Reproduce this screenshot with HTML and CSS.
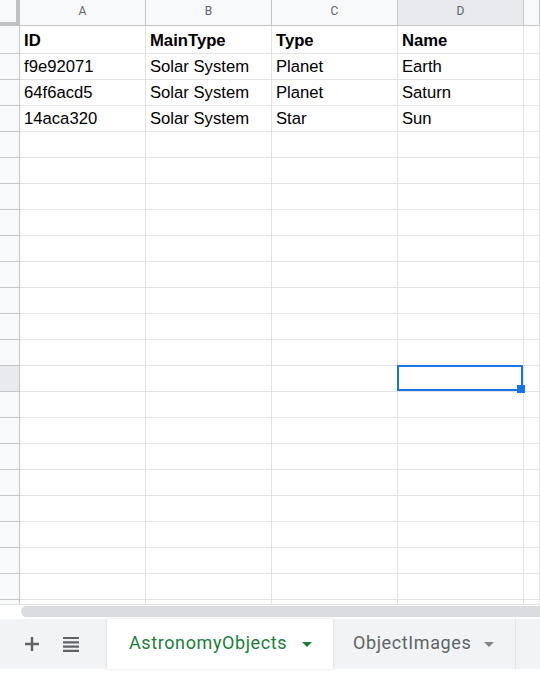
FILE: index.html
```html
<!DOCTYPE html>
<html>
<head>
<meta charset="utf-8">
<link rel="stylesheet" href="styles.css">
</head>
<body>
<div class="grid-wrap">
  <div class="grid" id="grid">
    <div class="corner"></div>
    <div class="colhead">A</div>
    <div class="colhead">B</div>
    <div class="colhead">C</div>
    <div class="colhead sel">D</div>
    <div class="colhead"></div>

    <div class="rowhead"></div>
    <div class="cell bold">ID</div>
    <div class="cell bold">MainType</div>
    <div class="cell bold">Type</div>
    <div class="cell bold">Name</div>
    <div class="cell"></div>

    <div class="rowhead"></div>
    <div class="cell">f9e92071</div>
    <div class="cell">Solar System</div>
    <div class="cell">Planet</div>
    <div class="cell">Earth</div>
    <div class="cell"></div>

    <div class="rowhead"></div>
    <div class="cell">64f6acd5</div>
    <div class="cell">Solar System</div>
    <div class="cell">Planet</div>
    <div class="cell">Saturn</div>
    <div class="cell"></div>

    <div class="rowhead"></div>
    <div class="cell">14aca320</div>
    <div class="cell">Solar System</div>
    <div class="cell">Star</div>
    <div class="cell">Sun</div>
    <div class="cell"></div>

    <div class="rowhead"></div><div class="cell"></div><div class="cell"></div><div class="cell"></div><div class="cell"></div><div class="cell"></div>
    <div class="rowhead"></div><div class="cell"></div><div class="cell"></div><div class="cell"></div><div class="cell"></div><div class="cell"></div>
    <div class="rowhead"></div><div class="cell"></div><div class="cell"></div><div class="cell"></div><div class="cell"></div><div class="cell"></div>
    <div class="rowhead"></div><div class="cell"></div><div class="cell"></div><div class="cell"></div><div class="cell"></div><div class="cell"></div>
    <div class="rowhead"></div><div class="cell"></div><div class="cell"></div><div class="cell"></div><div class="cell"></div><div class="cell"></div>
    <div class="rowhead"></div><div class="cell"></div><div class="cell"></div><div class="cell"></div><div class="cell"></div><div class="cell"></div>
    <div class="rowhead"></div><div class="cell"></div><div class="cell"></div><div class="cell"></div><div class="cell"></div><div class="cell"></div>
    <div class="rowhead"></div><div class="cell"></div><div class="cell"></div><div class="cell"></div><div class="cell"></div><div class="cell"></div>
    <div class="rowhead"></div><div class="cell"></div><div class="cell"></div><div class="cell"></div><div class="cell"></div><div class="cell"></div>
    <div class="rowhead sel"></div><div class="cell"></div><div class="cell"></div><div class="cell"></div><div class="cell active"></div><div class="cell"></div>
    <div class="rowhead"></div><div class="cell"></div><div class="cell"></div><div class="cell"></div><div class="cell"></div><div class="cell"></div>
    <div class="rowhead"></div><div class="cell"></div><div class="cell"></div><div class="cell"></div><div class="cell"></div><div class="cell"></div>
    <div class="rowhead"></div><div class="cell"></div><div class="cell"></div><div class="cell"></div><div class="cell"></div><div class="cell"></div>
    <div class="rowhead"></div><div class="cell"></div><div class="cell"></div><div class="cell"></div><div class="cell"></div><div class="cell"></div>
    <div class="rowhead"></div><div class="cell"></div><div class="cell"></div><div class="cell"></div><div class="cell"></div><div class="cell"></div>
    <div class="rowhead"></div><div class="cell"></div><div class="cell"></div><div class="cell"></div><div class="cell"></div><div class="cell"></div>
    <div class="rowhead"></div><div class="cell"></div><div class="cell"></div><div class="cell"></div><div class="cell"></div><div class="cell"></div>
    <div class="rowhead"></div><div class="cell"></div><div class="cell"></div><div class="cell"></div><div class="cell"></div><div class="cell"></div>
    <div class="rowhead"></div><div class="cell"></div><div class="cell"></div><div class="cell"></div><div class="cell"></div><div class="cell"></div>
  </div>
</div>
<div class="hscroll"><div class="thumb"></div></div>
<div class="tabbar">
  <div class="controls">
    <svg class="plus" width="14" height="14" viewBox="0 0 14 14"><path d="M7 0v14M0 7h14" stroke="#5f6368" stroke-width="2.4" fill="none"/></svg>
    <svg class="menu" width="16" height="15" viewBox="0 0 16 15"><path d="M0 1h16M0 5.3h16M0 9.6h16M0 13.9h16" stroke="#5f6368" stroke-width="2.2" fill="none"/></svg>
  </div>
  <div class="tab active-tab">
    <span class="tab-name">AstronomyObjects</span>
    <svg class="caret" width="10" height="5" viewBox="0 0 10 5"><path d="M0 0h10L5 5z" fill="#188038"/></svg>
  </div>
  <div class="tab">
    <span class="tab-name">ObjectImages</span>
    <svg class="caret" width="10" height="5" viewBox="0 0 10 5"><path d="M0 0h10L5 5z" fill="#80868b"/></svg>
  </div>
  <div class="tab-rest"></div>
</div>
</body>
</html>
```

FILE: styles.css
```css
html, body {
  margin: 0;
  padding: 0;
  background: #ffffff;
}
body {
  width: 540px;
  height: 673px;
  overflow: hidden;
  font-family: "Liberation Sans", Arial, sans-serif;
}
.grid-wrap {
  height: 605px;
  overflow: hidden;
  box-sizing: border-box;
  border-bottom: 1px solid #e2e3e3;
}
.grid {
  display: grid;
  grid-template-columns: 20px 126px 126px 126px 126px 1fr;
  grid-template-rows: 26px 28px;
  grid-auto-rows: 26px;
}
.grid > div {
  box-sizing: border-box;
  border-right: 1px solid #e2e3e3;
  border-bottom: 1px solid #e2e3e3;
}
.corner {
  background: #f8f9fa;
  border-right: 4px solid #c0c0c0 !important;
  border-bottom: 4px solid #c0c0c0 !important;
}
.colhead {
  background: #f8f9fa;
  border-right-color: #c4c7c5 !important;
  border-bottom-color: #c4c7c5 !important;
  color: #5f6368;
  font-family: Roboto, "Liberation Sans", sans-serif;
  font-size: 12px;
  display: flex;
  align-items: center;
  justify-content: center;
  padding-bottom: 3px;
}
.colhead.sel,
.rowhead.sel {
  background: #e8eaed;
}
.rowhead {
  background: #f8f9fa;
  border-right-color: #c4c7c5 !important;
  border-bottom-color: #c4c7c5 !important;
}
.cell {
  display: flex;
  align-items: flex-end;
  padding: 0 3px 3px 4px;
  font-size: 16.67px;
  line-height: 19px;
  color: #000000;
  white-space: nowrap;
  overflow: hidden;
}
.cell.bold {
  font-weight: bold;
}
.cell.active {
  position: relative;
  overflow: visible;
  z-index: 2;
}
.cell.active::after {
  content: "";
  position: absolute;
  top: -1px;
  left: -1px;
  right: 0;
  bottom: 0;
  border: 2px solid #1a73e8;
}
.cell.active::before {
  content: "";
  position: absolute;
  right: -2px;
  bottom: -2px;
  width: 8px;
  height: 8px;
  background: #1a73e8;
  z-index: 3;
}
.hscroll {
  height: 14px;
  padding: 1px 0 0 21px;
  box-sizing: border-box;
  background: #ffffff;
  overflow: hidden;
}
.thumb {
  height: 11px;
  width: 540px;
  border-radius: 6px;
  background: #dadce0;
}
.tabbar {
  height: 50px;
  background: #f1f3f4;
  display: flex;
  align-items: stretch;
}
.controls {
  width: 107px;
  display: flex;
  align-items: center;
  padding-left: 25px;
  box-sizing: border-box;
}
.plus {
  margin-right: 24px;
}
.tab {
  display: flex;
  align-items: center;
  padding: 0 21px 3px 20px;
  font-family: Roboto, "Liberation Sans", sans-serif;
  font-size: 18px;
  letter-spacing: 0.6px;
  color: #5f6368;
  box-sizing: border-box;
  width: 183px;
  border-right: 1px solid #e3e5e8;
}
.tab .caret {
  margin-left: auto;
  margin-top: 3px;
}
.active-tab {
  background: #ffffff;
  color: #188038;
  width: 226px;
  padding-left: 22px;
  border-right: none;
  box-shadow: 0 0 3px rgba(60, 64, 67, 0.18);
}
.tab-rest {
  flex: 1;
  background: #f1f3f4;
}
```
